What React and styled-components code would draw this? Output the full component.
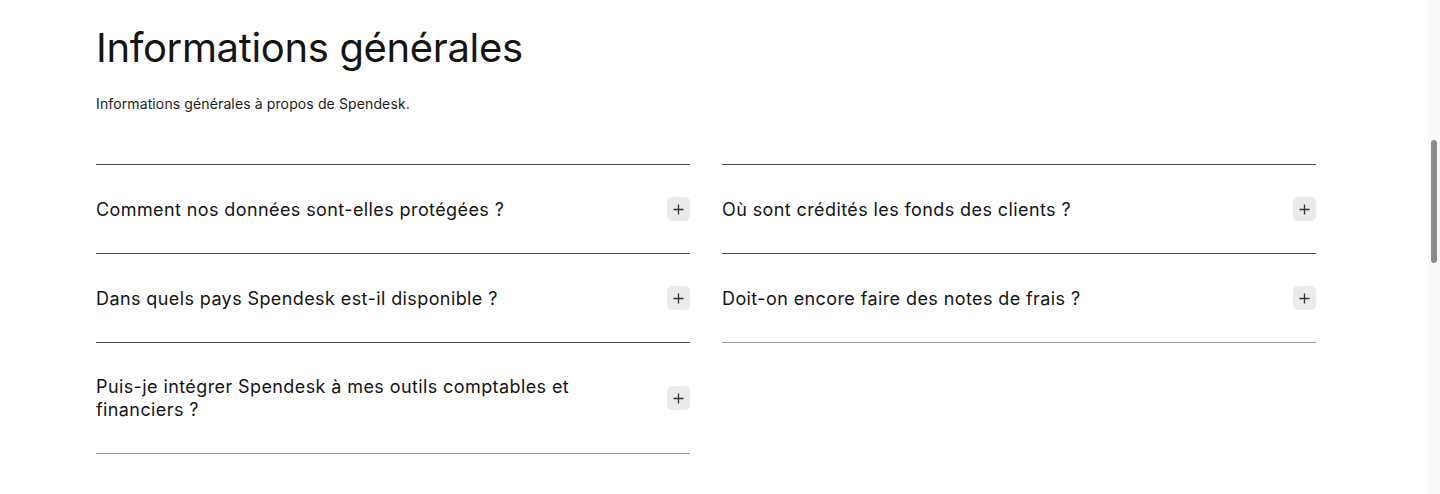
import React from 'react';
import styled, { createGlobalStyle } from 'styled-components';

const GlobalStyle = createGlobalStyle`
  html, body {
    margin: 0;
    padding: 0;
    background: #ffffff;
    overflow: hidden;
  }
  body {
    font-family: Inter, "Noto Sans", sans-serif;
    color: #141414;
  }
`;

const Page = styled.main`
  padding: 22px 0 0 96px;
  width: 1220px;
  height: 494px;
  box-sizing: content-box;
`;

const Heading = styled.h2`
  margin: 0;
  font-size: 40px;
  font-weight: 400;
  line-height: 52px;
  letter-spacing: -0.35px;
  color: #141414;
`;

const Lead = styled.p`
  margin: 20px 0 0;
  font-size: 14px;
  line-height: 20px;
  letter-spacing: 0.12px;
  color: #1c1c1c;
`;

const Grid = styled.div`
  margin-top: 50px;
  display: grid;
  grid-template-columns: 1fr 1fr;
  column-gap: 32px;
  align-items: start;
`;

const Column = styled.div`
  display: flex;
  flex-direction: column;
`;

const Item = styled.div`
  display: flex;
  align-items: center;
  justify-content: space-between;
  gap: 24px;
  padding: 32px 0;
  border-top: 1px solid #4a4a4a;
  border-bottom: ${(p) => (p.$last ? '1px solid #9a9a9a' : 'none')};
`;

const Question = styled.span`
  font-size: 18px;
  line-height: 23px;
  letter-spacing: 0.4px;
  max-width: 490px;
  color: #141414;
`;

const PlusButton = styled.button`
  flex: none;
  width: 23px;
  height: 24px;
  padding: 0;
  border: none;
  border-radius: 5px;
  background: #ebebeb;
  display: flex;
  align-items: center;
  justify-content: center;
  cursor: pointer;
`;

const Scrollbar = styled.div`
  position: fixed;
  top: 0;
  right: 0;
  width: 12px;
  height: 100%;
  background: #fafafa;
`;

const Thumb = styled.div`
  position: absolute;
  left: 3px;
  top: 140px;
  width: 6px;
  height: 123px;
  border-radius: 3px;
  background: #8c8c8c;
`;

const Plus = () => (
  <svg width="11" height="11" viewBox="0 0 11 11" fill="none">
    <path d="M5.5 0.5v10M0.5 5.5h10" stroke="#333" strokeWidth="1.3" />
  </svg>
);

const left = [
  'Comment nos données sont-elles protégées ?',
  'Dans quels pays Spendesk est-il disponible ?',
  'Puis-je intégrer Spendesk à mes outils comptables et financiers ?',
];

const right = [
  'Où sont crédités les fonds des clients ?',
  'Doit-on encore faire des notes de frais ?',
];

const FaqColumn = ({ items }) => (
  <Column>
    {items.map((q, i) => (
      <Item key={q} $last={i === items.length - 1}>
        <Question>{q}</Question>
        <PlusButton aria-label="Ouvrir">
          <Plus />
        </PlusButton>
      </Item>
    ))}
  </Column>
);

export default function App() {
  return (
    <>
      <GlobalStyle />
      <Page>
        <Heading>Informations générales</Heading>
        <Lead>Informations générales à propos de Spendesk.</Lead>
        <Grid>
          <FaqColumn items={left} />
          <FaqColumn items={right} />
        </Grid>
      </Page>
      <Scrollbar>
        <Thumb />
      </Scrollbar>
    </>
  );
}
